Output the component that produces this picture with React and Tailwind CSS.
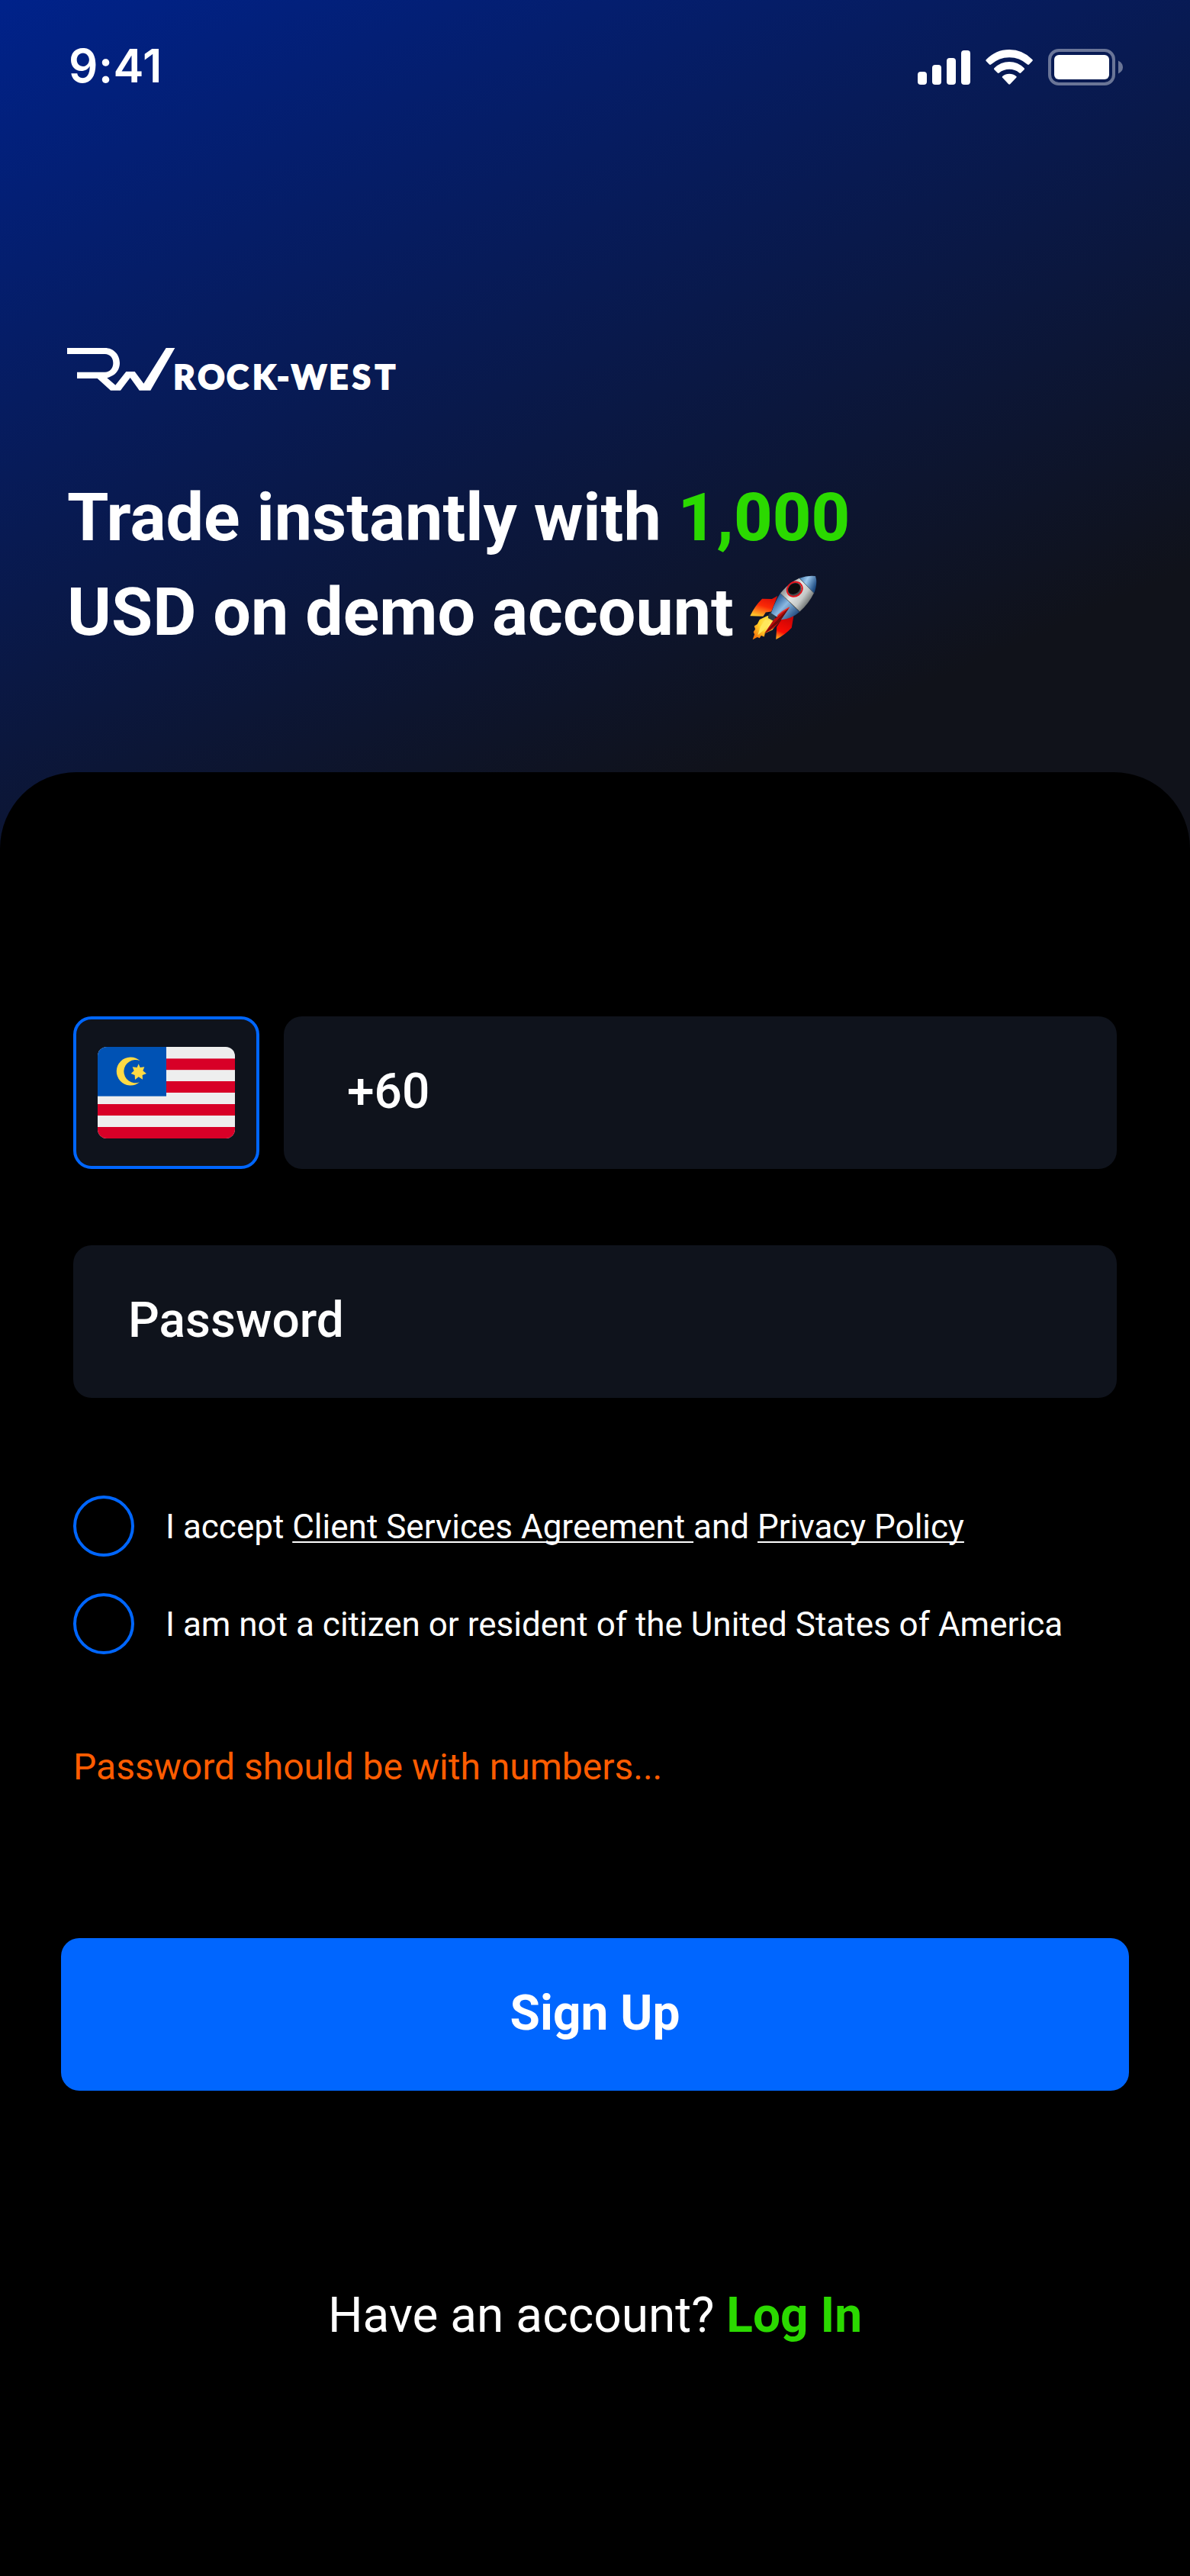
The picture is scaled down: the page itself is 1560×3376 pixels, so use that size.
const Wifi = () => (
  <svg className="ml-5 h-[46px] w-[62px]" viewBox="337 74 185 139" preserveAspectRatio="none" fill="#fff">
    <path d="M339 114Q337 117 339 119L352 133Q355 136 358 133Q390 105 430 105Q470 105 501 133Q504 136 507 133L520 119Q523 116 520 113Q482 74 430 74Q377 74 339 114Z" />
    <path d="M371 147Q368 150 371 153L384 166Q387 169 390 166Q408 152 430 152Q452 152 469 166Q472 169 475 166L488 153Q491 150 488 147Q463 122 430 122Q396 122 371 147Z" />
    <path d="M403 180Q401 183 403 185L427 211Q430 214 433 211L457 185Q460 182 457 180Q445 170 430 170Q415 170 403 180Z" />
  </svg>
);

const Battery = () => (
  <svg className="ml-5 h-12 w-[98px]" viewBox="0 0 98 48">
    <rect x="2" y="2" width="84" height="44" rx="12" fill="none" stroke="#fff" strokeOpacity=".4" strokeWidth="4" />
    <rect x="8" y="8" width="72" height="32" rx="6" fill="#fff" />
    <path d="M92 15.5Q98 18.5 98 24Q98 29.500 92 32.500Z" fill="#fff" fillOpacity=".4" />
  </svg>
);

const Logo = () => (
  <svg className="ml-2 h-14 w-[440px] overflow-visible" viewBox="54 78 1320 168" fill="#fff">
    <path d="M54 78H203C236 78 261 104 261 137C261 160 248 181 226 190C221 193 216 195 211 196L244 224L286 171H320L355 218L443 78H478L382 245H338L302 195L264 245H225L173 198H93V173H203C222 173 235 157 235 137C235 117 222 102 203 102H54Z" />
    <text
      x="472 568 681 783 879 936 1084 1175 1265"
      y="241"
      fontFamily="Lato, sans-serif"
      fontWeight="900"
      fontSize="131"
      stroke="#fff"
      strokeWidth="6"
    >
      ROCK-WEST
    </text>
  </svg>
);

const Rocket = () => (
  <svg className="mb-[11px] ml-[21px] h-[85px] w-[88px]" viewBox="374 400 262 252" preserveAspectRatio="none">
    <defs>
      <linearGradient id="hull" gradientUnits="userSpaceOnUse" x1="505" y1="450" x2="605" y2="525">
        <stop offset="0" stopColor="#8b8f90" />
        <stop offset=".35" stopColor="#e4e6e5" />
        <stop offset=".65" stopColor="#c4c8c7" />
        <stop offset="1" stopColor="#4c504f" />
      </linearGradient>
      <linearGradient id="band" gradientUnits="userSpaceOnUse" x1="470" y1="500" x2="545" y2="570">
        <stop offset="0" stopColor="#2d5f9a" />
        <stop offset=".4" stopColor="#8bb9e2" />
        <stop offset="1" stopColor="#1f4779" />
      </linearGradient>
      <linearGradient id="nose" x1="0" y1="0" x2="1" y2=".5">
        <stop offset="0" stopColor="#3c74ab" />
        <stop offset=".45" stopColor="#9cc8ec" />
        <stop offset="1" stopColor="#1d4b82" />
      </linearGradient>
      <linearGradient id="finLeft" x1=".7" y1="0" x2=".3" y2="1">
        <stop offset="0" stopColor="#d90d08" />
        <stop offset=".5" stopColor="#fb2a06" />
        <stop offset="1" stopColor="#ffc32a" />
      </linearGradient>
      <linearGradient id="finRight" x1=".6" y1="0" x2=".3" y2="1">
        <stop offset="0" stopColor="#c80505" />
        <stop offset=".7" stopColor="#fa0b03" />
        <stop offset="1" stopColor="#ffa21d" />
      </linearGradient>
      <radialGradient id="flame" cx=".6" cy=".35" r=".7">
        <stop offset="0" stopColor="#fff27a" />
        <stop offset=".5" stopColor="#ffd22c" />
        <stop offset="1" stopColor="#f77a0c" />
      </radialGradient>
    </defs>
    <path d="M482 480L460 492L422 491Q392 520 375 558L426 559L436 544L458 541Z" fill="url(#finLeft)" />
    <path d="M498 571L545 557L537 604Q510 633 476 649L479 600Z" fill="url(#finRight)" />
    <path d="M443 557L412 572L403 590L391 597L395 609L388 620L392 630L385 650L403 640L412 644L418 634L430 639L433 625L462 612L490 576Z" fill="url(#flame)" />
    <path d="M436 569L415 600L405 632L429 612L452 586Z" fill="#ffe75b" />
    <path d="M447 553L456 542L476 559L467 578L445 566Z" fill="#2c3d49" />
    <path d="M493 470L568 542Q540 567 496 573L457 547Q470 505 493 470Z" fill="url(#band)" />
    <path d="M567 411L624 469Q604 510 569 541L493 470Q525 430 567 411Z" fill="url(#hull)" />
    <path d="M567 411Q601 399 630 403Q640 430 624 470Z" fill="url(#nose)" />
    <path d="M493 470L569 541M568 411L624 469" fill="none" stroke="#55595a" strokeWidth="2" />
    <path d="M509 483L566 537" stroke="#c8b778" strokeWidth="2" strokeDasharray="3 8" />
    <ellipse cx="548" cy="454" rx="29" ry="26" transform="rotate(-42 548 454)" fill="#454a4d" />
    <ellipse cx="549" cy="454" rx="31" ry="27" transform="rotate(-35 549 454)" fill="none" stroke="#e0131c" strokeWidth="6" />
    <ellipse cx="547" cy="452" rx="25" ry="20" transform="rotate(-35 547 452)" fill="#0b0c0d" />
    <path d="M528 525Q494 545 467 573L431 625Q465 613 489 582Z" fill="#b70d0b" />
    <path d="M528 525L489 582L431 625Q480 575 528 525Z" fill="#6e0908" />
    <path d="M528 525Q501 539 482 557" fill="none" stroke="#f52a20" strokeWidth="4" />
  </svg>
);

const starPoints = "305,253 311,267 328,265 322,280 336,291 320,297 321,314 305,304 291,315 290,297 275,291 287,280 281,265 299,267";

const Flag = () => (
  <svg className="h-[120px] w-[180px] rounded-xl" viewBox="144 186 540 360">
    <rect x="144" y="186" width="540" height="360" fill="#eee" />
    <g fill="#d80027">
      <rect x="414" y="232" width="270" height="44.500" />
      <rect x="414" y="321" width="270" height="45" />
      <rect x="144" y="411" width="540" height="45" />
      <rect x="144" y="501" width="540" height="45" />
    </g>
    <rect x="144" y="186" width="270" height="194" fill="#0052b4" />
    <path d="M311 241A55.500 55.500 0 1 0 309 325A45.500 45.500 0 1 1 311 241Z" fill="#ffda44" />
    <polygon points={starPoints} fill="#ffda44" />
  </svg>
);

const Agreement = ({ children }) => (
  <label className="flex h-20 items-center gap-[41px]">
    <span className="size-20 shrink-0 rounded-full border-4 border-[#0066ff]" />
    <span className="whitespace-nowrap pt-0.5 text-[44px] leading-[52px]">{children}</span>
  </label>
);

export default function App() {
  return (
    <div className="h-[3376px] w-[1560px] overflow-hidden bg-black font-['Roboto',sans-serif] text-white">
      <div className="h-[1126px] bg-[linear-gradient(156.4deg,#00228a_0%,#10121a_79%)]">
        <div className="flex h-44 items-center justify-between pr-[88px] pl-[90px]">
          <div className="pb-1 font-['Inter',sans-serif] text-[60px] font-semibold leading-none tracking-[0.5px]">9:41</div>
          <div className="flex items-center">
            <div className="flex h-[46px] items-end gap-[7px]">
              <span className="h-[17px] w-3 rounded-[4px] bg-white" />
              <span className="h-[26px] w-3 rounded-[4px] bg-white" />
              <span className="h-[35px] w-3 rounded-[4px] bg-white" />
              <span className="h-[45px] w-3 rounded-[4px] bg-white" />
            </div>
            <Wifi />
            <Battery />
          </div>
        </div>
        <div className="px-20 pt-[280px]">
          <Logo />
          <h1 className="ml-2 mt-[104px] whitespace-nowrap text-[88px] font-bold leading-[124px]">
            <div>Trade instantly with <span className="font-extrabold text-[#2bd900]">1,000</span></div>
            <div className="flex h-[124px] items-center">USD on demo account<Rocket /></div>
          </h1>
        </div>
      </div>
      <main className="relative -mt-[114px] h-[2364px] rounded-t-[100px] bg-black px-20 pt-[320px]">
        <div className="px-4">
          <div className="flex h-[200px] gap-8">
            <div className="flex w-[244px] items-center justify-center rounded-3xl border-4 border-[#0066ff] bg-[#0f131c]">
              <Flag />
            </div>
            <div className="flex flex-1 items-center rounded-3xl bg-[#0f131c] pb-[3px] pl-[83px] text-[64px] font-medium">+60</div>
          </div>
          <div className="mt-[100px] flex h-[200px] items-center rounded-3xl bg-[#0f131c] pb-[3px] pl-[72px] text-[64px] font-medium">Password</div>
          <div className="mt-32 flex flex-col gap-12">
            <Agreement>
              I accept <span className="underline decoration-2 underline-offset-4 [text-decoration-skip-ink:none]">Client Services Agreement </span>and <span className="underline decoration-2 underline-offset-4 [text-decoration-skip-ink:none]">Privacy Policy</span>
            </Agreement>
            <Agreement>I am not a citizen or resident of the United States of America</Agreement>
          </div>
          <p className="mt-[120px] text-[48px] leading-[56px] text-[#ff5c00]">Password should be with numbers...</p>
        </div>
        <button className="mt-[196px] flex h-[200px] w-full items-center justify-center rounded-3xl bg-[#0066ff] pb-[3px] text-[64px] font-bold">Sign Up</button>
        <p className="mt-[257px] text-center text-[64px] leading-[75px]">
          Have an account? <span className="font-bold text-[#2bd900]">Log In</span>
        </p>
      </main>
    </div>
  );
}
